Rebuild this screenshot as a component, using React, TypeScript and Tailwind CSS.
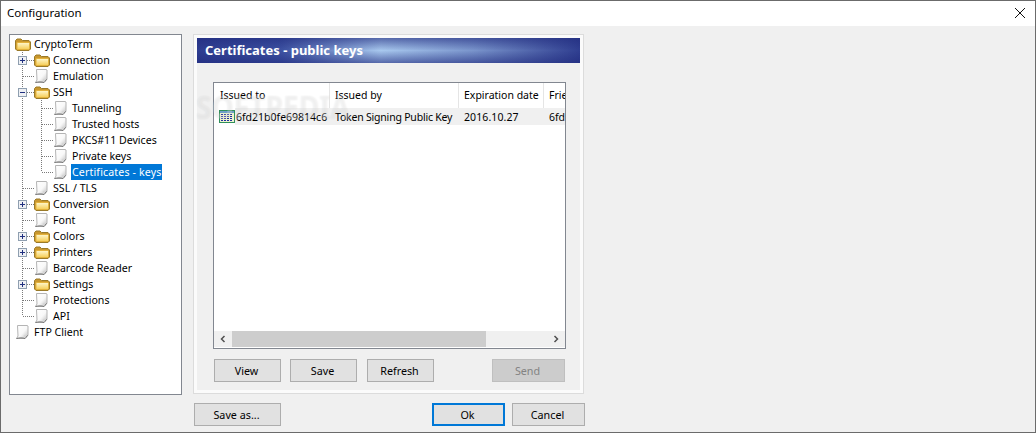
import React from "react";

const F = "[font-family:'Noto_Sans',sans-serif]";

function Folder() {
  return (
    <svg width="16" height="16" viewBox="0 0 16 16" className="shrink-0">
      <defs>
        <linearGradient id="fb" x1="0" y1="0" x2="0" y2="1">
          <stop offset="0" stopColor="#fff8d0" />
          <stop offset="1" stopColor="#f5cd55" />
        </linearGradient>
      </defs>
      <path d="M.5 13V4.500l1.500-1.500h4l1.500 1.500h6.500l1.500 1.500v7l-1.500 1.500H2z" fill="#c9972e" stroke="#9a7a28" />
      <path d="M2 6.500l12 0 .5 1V12.500l-1 1H2.500l-.5-1z" fill="url(#fb)" stroke="#e3b23c" />
    </svg>
  );
}

function Doc() {
  return (
    <svg width="16" height="16" viewBox="0 0 16 16" className="shrink-0">
      <defs>
        <linearGradient id="db" x1="0" y1="0" x2="1" y2="1">
          <stop offset="0" stopColor="#ffffff" />
          <stop offset="0.55" stopColor="#f8f8f8" />
          <stop offset="1" stopColor="#bdbdbd" />
        </linearGradient>
      </defs>
      <path d="M2.500 1.500h9.500l1 .5v9l-3 3.500H1.500l1.500-2.500z" fill="url(#db)" stroke="#b4b4b4" />
      <path d="M1.500 14.500c3-.8 6-.8 8.500 0l3-3.500" fill="none" stroke="#777777" />
      <path d="M10 14l-1-2.500 3.500-.5" fill="none" stroke="#d6d6d6" />
    </svg>
  );
}

function Guides({ kind, exp, cont, last }: { kind: number; exp?: string; cont?: boolean; last?: boolean }) {
  const dot = { stroke: "#7a7a7a", strokeDasharray: "1 1", fill: "none" };
  if (kind === 0) return null;
  const w = kind === 1 ? 19 : 38;
  return (
    <svg width={w} height="16" viewBox={`0 0 ${w} 16`} className="shrink-0">
      {kind === 2 ? (
        <>
          <path d="M7.500 0V16" {...dot} />
          <path d={`M26.500 0V${last ? 8 : 16}`} {...dot} />
          <path d="M27 8.500H38" {...dot} />
        </>
      ) : (
        <>
          <path d={`M7.500 0V${cont === false ? 8 : 16}`} {...dot} />
          <path d="M8 8.500H19" {...dot} />
          {exp && (
            <>
              <rect x="3.500" y="4.500" width="8" height="8" fill="#eef0f4" stroke="#8f9fb0" />
              <path d="M5 8.500h5" stroke="#1f2f7f" />
              {exp === "+" && <path d="M7.500 6v5" stroke="#1f2f7f" />}
            </>
          )}
        </>
      )}
    </svg>
  );
}

type Row = { label: string; kind: number; icon: "f" | "d"; exp?: string; last?: boolean; sel?: boolean; cont?: boolean };

const rows: Row[] = [
  { label: "CryptoTerm", kind: 0, icon: "f" },
  { label: "Connection", kind: 1, icon: "f", exp: "+" },
  { label: "Emulation", kind: 1, icon: "d" },
  { label: "SSH", kind: 1, icon: "f", exp: "-" },
  { label: "Tunneling", kind: 2, icon: "d" },
  { label: "Trusted hosts", kind: 2, icon: "d" },
  { label: "PKCS#11 Devices", kind: 2, icon: "d" },
  { label: "Private keys", kind: 2, icon: "d" },
  { label: "Certificates - keys", kind: 2, icon: "d", last: true, sel: true },
  { label: "SSL / TLS", kind: 1, icon: "d" },
  { label: "Conversion", kind: 1, icon: "f", exp: "+" },
  { label: "Font", kind: 1, icon: "d" },
  { label: "Colors", kind: 1, icon: "f", exp: "+" },
  { label: "Printers", kind: 1, icon: "f", exp: "+" },
  { label: "Barcode Reader", kind: 1, icon: "d" },
  { label: "Settings", kind: 1, icon: "f", exp: "+" },
  { label: "Protections", kind: 1, icon: "d" },
  { label: "API", kind: 1, icon: "d", cont: false },
  { label: "FTP Client", kind: 0, icon: "d" },
];

function Btn({ children, w, kind }: { children: React.ReactNode; w: string; kind?: string }) {
  const base = "h-[23px] flex items-center justify-center text-[10.75px] pt-[1px] pr-[2px] ";
  const k =
    kind === "dis"
      ? "border bg-[#cccccc] border-[#bfbfbf] text-[#838383]"
      : kind === "def"
        ? "bg-[#e1e1e1] border-2 border-[#0078d7] text-black"
        : "border bg-[#e1e1e1] border-[#adadad] text-black";
  return <div className={base + k + " " + w}>{children}</div>;
}

export default function App() {
  return (
    <div className={`w-[1036px] h-[433px] overflow-hidden flex flex-col border border-[#6b6b6b] bg-[#f0f0f0] text-black ${F} text-[10.6px]`}>
      <div className="h-[25px] bg-white flex items-center justify-between pl-[6px] pr-[9px] pb-[1px] shrink-0">
        <span className="text-[11.5px]">Configuration</span>
        <svg width="12" height="12" viewBox="0 0 12 12">
          <path d="M1 1L11 11M11 1L1 11" stroke="#111" fill="none" />
        </svg>
      </div>
      <div className="flex pl-[8px] pt-[8px] gap-[11px]">
        <div className="w-[173px] h-[361px] bg-white border border-[#828790] pl-[5px] pt-[1px] shrink-0">
          {rows.map((r) => (
            <div key={r.label} className="h-4 flex items-center">
              <Guides kind={r.kind} exp={r.exp} last={r.last} cont={r.cont} />
              {r.icon === "f" ? <Folder /> : <Doc />}
              <span
                className={`h-4 leading-[16px] whitespace-nowrap ml-[2px] px-[1px] ${
                  r.sel ? "bg-[#0078d7] text-white w-[91px] tracking-[0.15px]" : ""
                }`}
              >
                {r.label}
              </span>
            </div>
          ))}
        </div>
        <div className="flex flex-col w-[392px]">
          <div className="w-[391px] h-[360px] border border-[#dcdcdc] flex flex-col">
            <div className="flex-1 border-[3px] border-[#fbfbfb] flex flex-col min-h-0">
              <div className="h-[25px] shrink-0 flex items-center pl-[8px] text-white font-bold text-[13px] bg-[linear-gradient(180deg,rgba(32,42,125,0.6)_0%,rgba(32,42,125,0)_50%,rgba(32,42,125,0.6)_100%),linear-gradient(90deg,#2e3d90_0%,#3d52a2_22%,#a8c8ee_48%,#7a95cc_72%,#2f3e90_100%)]">
                Certificates - public keys
              </div>
              <div className="relative flex-1 flex flex-col pl-[16px] pr-[14px] pt-[19px]">
                <div className="h-[267px] bg-white border border-[#828790] flex flex-col overflow-hidden shrink-0 text-[10.5px]">
                  <div className="h-[25px] flex shrink-0 items-center">
                    {[
                      ["w-[116px] pl-[6px]", "Issued to"],
                      ["w-[129px] pl-[5px]", "Issued by"],
                      ["w-[85px] pl-[5px]", "Expiration date"],
                      ["flex-1 pl-[5px]", "Frie"],
                    ].map(([c, t], i) => (
                      <div key={t} className={`${c} h-full pt-[1px] flex items-center overflow-hidden whitespace-nowrap ${i < 3 ? "border-r border-[#e5e5e5]" : ""}`}>
                        {t}
                      </div>
                    ))}
                  </div>
                  <div className="h-[17px] flex items-center shrink-0">
                    <div className="w-[21px] pl-[5px] shrink-0">
                      <svg width="16" height="13" viewBox="0 0 16 13" className="block">
                        <rect x="0.500" y="0.500" width="15" height="12" fill="#eef3d0" stroke="#2f8f5a" />
                        <rect x="1" y="1" width="14" height="2" fill="#6f9fc8" />
                        <path d="M2 4.500h12M2 6.500h12M2 8.500h12M2 10.500h12" stroke="#1f2f9f" strokeDasharray="2 1" />
                      </svg>
                    </div>
                    <div className="flex-1 h-[17px] pt-[2px] bg-[#f0f0f0] flex items-center whitespace-nowrap">
                      <span className="w-[94px] shrink-0 overflow-hidden pl-[1px]">6fd21b0fe69814c6</span>
                      <span className="w-[129px] shrink-0 pl-[6px] tracking-[-0.2px]">Token Signing Public Key</span>
                      <span className="w-[85px] shrink-0 pl-[6px] tracking-[0.1px]">2016.10.27</span>
                      <span className="pl-[6px]">6fd</span>
                    </div>
                  </div>
                  <div className="flex-1" />
                  <div className="h-[16px] mb-[1px] bg-[#f0f0f0] flex items-center shrink-0">
                    <div className="w-[18px] flex justify-center">
                      <svg width="8" height="8" viewBox="0 0 8 8"><path d="M5.500 1L2.500 4l3 3" stroke="#505050" strokeWidth="1.500" fill="none" /></svg>
                    </div>
                    <div className="w-[254px] h-full bg-[#cdcdcd]" />
                    <div className="flex-1" />
                    <div className="w-[18px] flex justify-center">
                      <svg width="8" height="8" viewBox="0 0 8 8"><path d="M2.500 1L5.500 4l-3 3" stroke="#505050" strokeWidth="1.500" fill="none" /></svg>
                    </div>
                  </div>
                </div>
                <div className="flex mt-[10px] pl-[1px]">
                  <Btn w="w-[67px]">View</Btn>
                  <Btn w="w-[67px] ml-[9px]">Save</Btn>
                  <Btn w="w-[67px] ml-[10px]">Refresh</Btn>
                  <Btn w="w-[73px] ml-[58px]" kind="dis">Send</Btn>
                </div>
                <div className="absolute left-[-1px] top-[26px] origin-left scale-x-[0.88] text-[32px] leading-[36px] font-bold text-white/25 [text-shadow:0_0_2px_rgba(0,0,0,0.08)] whitespace-nowrap pointer-events-none">
                  SOFTPEDIA
                </div>
              </div>
            </div>
          </div>
          <div className="flex mt-[9px] pl-[1px]">
            <Btn w="w-[87px]">Save as...</Btn>
            <Btn w="w-[73px] ml-[151px]" kind="def">Ok</Btn>
            <Btn w="w-[73px] ml-[7px]">Cancel</Btn>
          </div>
        </div>
      </div>
    </div>
  );
}
